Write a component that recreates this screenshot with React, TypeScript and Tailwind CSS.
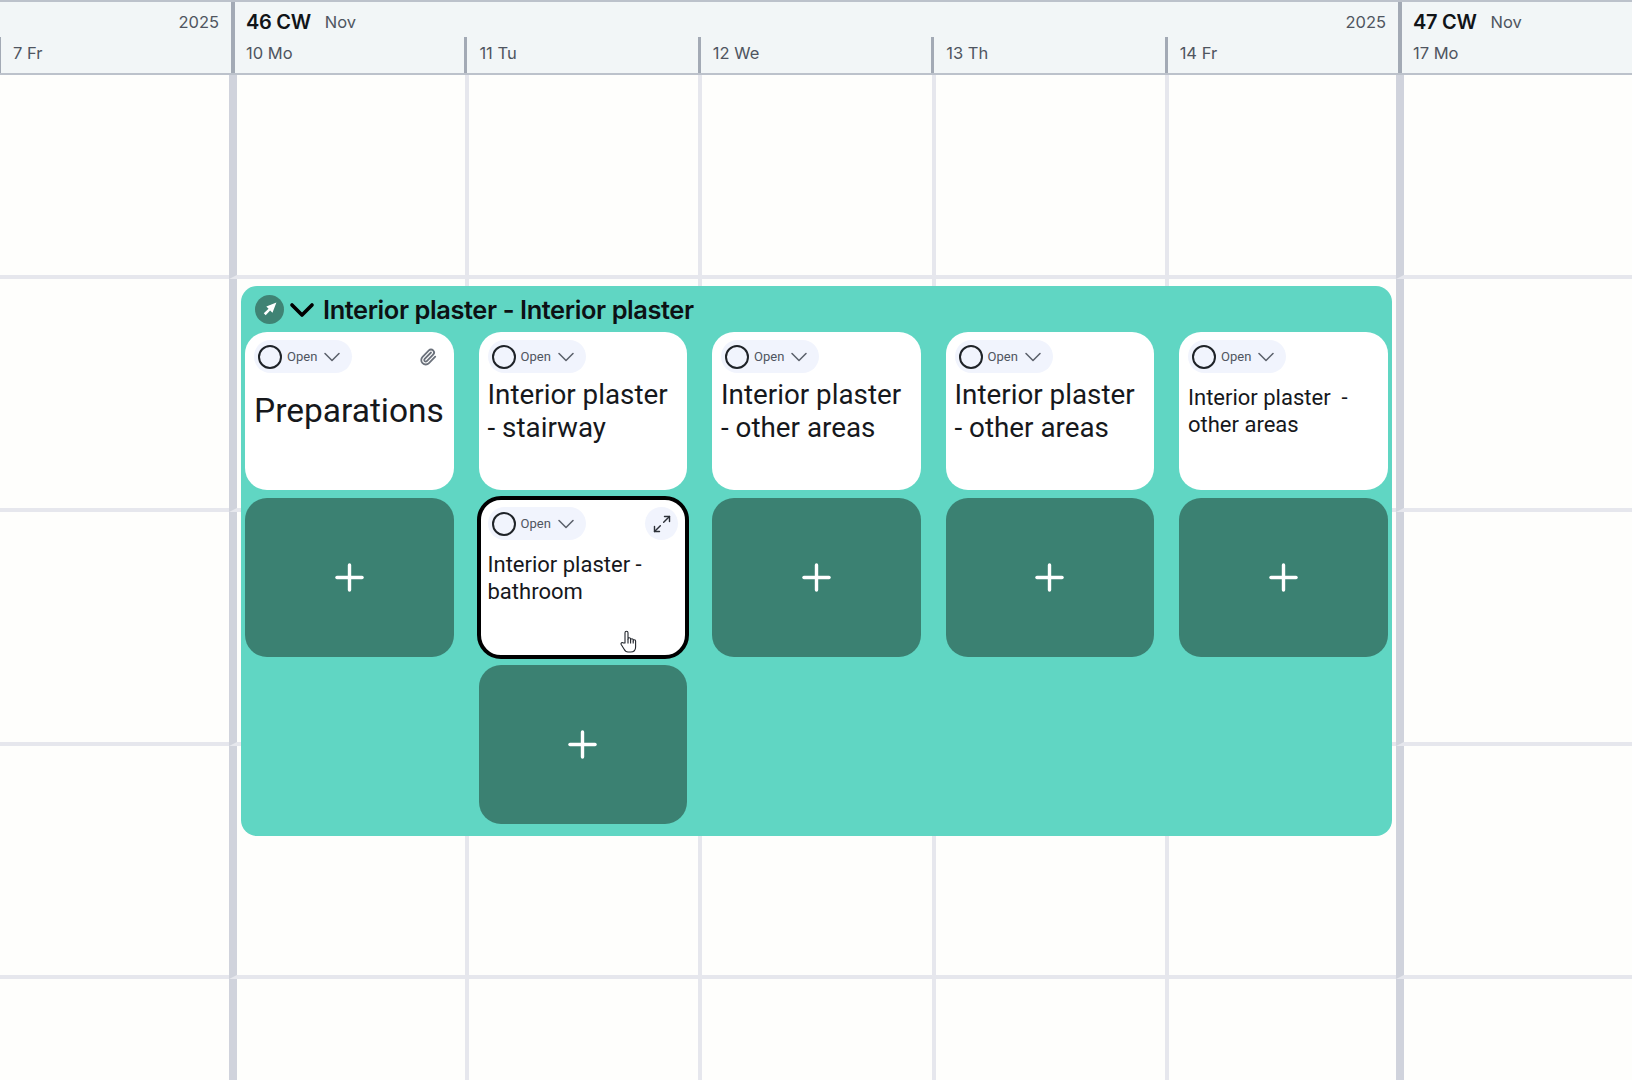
import React from 'react';
import { ChevronDown, Maximize2, Paperclip, Plus } from 'lucide-react';

const COL_WIDTHS = [229, 236, 233, 234, 233, 231, 236];
const ROW_HEIGHTS = [204, 233, 234, 233, 102];

type Task = { title: string; size: 'xl' | 'lg' | 'md'; active?: boolean; clip?: boolean };

const COLUMNS: { task: Task; adds: number }[] = [
  { task: { title: 'Preparations', size: 'xl', clip: true }, adds: 1 },
  { task: { title: 'Interior plaster - stairway', size: 'lg' }, adds: 0 },
  { task: { title: 'Interior plaster - other areas', size: 'lg' }, adds: 1 },
  { task: { title: 'Interior plaster - other areas', size: 'lg' }, adds: 1 },
  { task: { title: 'Interior plaster\u00a0 - other areas', size: 'md' }, adds: 1 },
];

const TITLE_CLASS = {
  xl: 'text-[33.5px] leading-[38px] pt-[19px]',
  lg: 'text-[27.8px] leading-[33px] pt-[5px]',
  md: 'text-[22px] leading-[26.5px] pt-[12px]',
};

const StatusPill = () => (
  <div className="flex h-[33px] w-[98px] items-center rounded-full bg-[#f1f4fd] pl-1">
    <span className="h-[24px] w-[24px] shrink-0 rounded-full border-[2.5px] border-[#1f2328]" />
    <span className="ml-[5px] font-['Roboto',sans-serif] text-[13px] text-[#4f5560]">Open</span>
    <ChevronDown className="ml-[1px] shrink-0 text-[#5c626c]" size={28} strokeWidth={1.35} />
  </div>
);

const TaskCard = ({ task }: { task: Task }) => (
  <div
    className={`h-[158px] rounded-[22px] bg-white px-[9px] font-['Roboto',sans-serif] text-[#16181c] ${
      task.active ? 'h-[159px] pt-[9px] outline-4 -outline-offset-2 outline-black' : 'pt-[8px]'
    }`}
  >
    <div className="flex items-center justify-between">
      <StatusPill />
      {task.clip && <Paperclip className="mr-[8px] text-[#6b717b]" size={18} strokeWidth={2.4} />}
      {task.active && (
        <span className="flex h-[33px] w-[33px] items-center justify-center rounded-full bg-[#f1f4fd]">
          <Maximize2 className="text-[#2c3038]" size={20} strokeWidth={1.7} />
        </span>
      )}
    </div>
    <div className={TITLE_CLASS[task.size]}>{task.title}</div>
  </div>
);

const AddCard = () => (
  <div className="flex h-[159px] items-center justify-center rounded-[22px] bg-[#3b8172] text-white">
    <Plus size={43} strokeWidth={1.9} />
  </div>
);

const DayLabel = ({ label, first }: { label: string; first?: boolean }) => (
  <div className={`flex h-[36px] flex-1 items-center pb-[4px] ${first ? 'pl-[11px]' : 'border-l-[3px] border-[#a3aab5] pl-[12px]'}`}>
    {label}
  </div>
);

const WeekHeader = ({ cw, showYear, days }: { cw: string; showYear: boolean; days: string[] }) => (
  <div className="flex h-full flex-1 flex-col border-l-4 border-[#a3aab5]">
    <div className="flex h-[35px] items-center pl-[11px] pr-[12px] pt-[5px]">
      <span className="text-[20px] font-semibold tracking-[-0.3px] text-[#111418]">{cw}</span>
      <span className="ml-[14px] text-[16.5px] text-[#4f5560]">Nov</span>
      {showYear && <span className="ml-auto text-[16.5px] text-[#4f5560]">2025</span>}
    </div>
    <div className="flex text-[16.5px] text-[#4f5560]">
      {days.map((d, i) => (
        <DayLabel key={d} label={d} first={i === 0} />
      ))}
    </div>
  </div>
);

export default function App() {
  return (
    <div className="h-[1080px] w-[1632px] overflow-hidden bg-[#fefefc] font-['Inter',sans-serif]">
      <header className="flex h-[75px] border-y-2 border-[#bcc2cb] bg-[#f2f6f7]">
        <div className="flex h-full w-[231px] shrink-0 flex-col text-[16.5px] text-[#4f5560]">
          <div className="flex h-[35px] items-center justify-end pr-[12px] pt-[5px]">2025</div>
          <div className="flex h-[36px] items-center border-l border-[#a3aab5] pb-[4px] pl-[12px]">7 Fr</div>
        </div>
        <div className="flex h-full w-[1167px] shrink-0">
          <WeekHeader cw="46 CW" showYear days={['10 Mo', '11 Tu', '12 We', '13 Th', '14 Fr']} />
        </div>
        <WeekHeader cw="47 CW" showYear={false} days={['17 Mo']} />
      </header>

      <main className="relative">
        {ROW_HEIGHTS.map((h, r) => (
          <div key={r} className="flex" style={{ height: h }}>
            {COL_WIDTHS.map((w, c) => (
              <div
                key={c}
                className={`${r < 4 ? 'border-b-4' : ''} border-[#e6e7ed] ${
                  c === 0 ? '' : c === 1 || c === 6 ? 'border-l-8 border-l-[#d0d3dc]' : 'border-l-4'
                }`}
                style={{ width: w }}
              />
            ))}
          </div>
        ))}

        {/* task group sits on top of the calendar grid */}
        <section className="absolute left-[241px] top-[211px] w-[1151px] rounded-[16px] bg-[#60d6c3] px-1 pb-[12px]">
          <div className="flex h-[46px] items-center pl-[10px] pt-[1px]">
            <span className="flex h-[29px] w-[29px] shrink-0 items-center justify-center rounded-full bg-[#3f8374]">
              <svg viewBox="0 0 16 16" className="h-[17px] w-[17px]" fill="white">
                <path d="M14.5 1.5 L10.8 11 L8.6 8.9 L4.4 13.4 L2.6 11.6 L7.1 7.4 L5 5.2 Z" />
              </svg>
            </span>
            <ChevronDown className="ml-[-2px] shrink-0 text-black" size={40} strokeWidth={2.2} />
            <span className="ml-[1px] pt-[1px] text-[25.4px] font-semibold tracking-[-0.4px] text-[#0d1114]">
              Interior plaster - Interior plaster
            </span>
          </div>
          <div className="grid grid-cols-[repeat(5,208.5px)] gap-x-[25px]">
            {COLUMNS.map((col, i) => (
              <div key={i} className="flex flex-col gap-2">
                <TaskCard task={col.task} />
                {col.adds === 1 && <AddCard />}
                {i === 1 && (
                  <>
                    <TaskCard task={{ title: 'Interior plaster - bathroom', size: 'md', active: true }} />
                    <AddCard />
                  </>
                )}
              </div>
            ))}
          </div>
        </section>

        {/* mouse pointer */}
        <svg
          viewBox="0 0 17 23"
          className="absolute left-[620px] top-[555px] h-[23px] w-[17px]"
          fill="white"
          stroke="#22262c"
          strokeWidth="1.1"
          strokeLinejoin="round"
        >
          <path d="M5 13V2.8a1.5 1.5 0 0 1 3 0V9a1.3 1.3 0 0 1 2.6 0v1a1.3 1.3 0 0 1 2.6 0v1a1.2 1.2 0 0 1 2.4 0v6c0 3-2 5-5 5H8c-2 0-3-1-4-3l-2.8-4.5c-.7-1.5 1-2.7 2.2-1.5Z" />
          <path d="M8 9v4.5M10.6 10v3.5M13.2 11v2.5" fill="none" />
        </svg>
      </main>
    </div>
  );
}
